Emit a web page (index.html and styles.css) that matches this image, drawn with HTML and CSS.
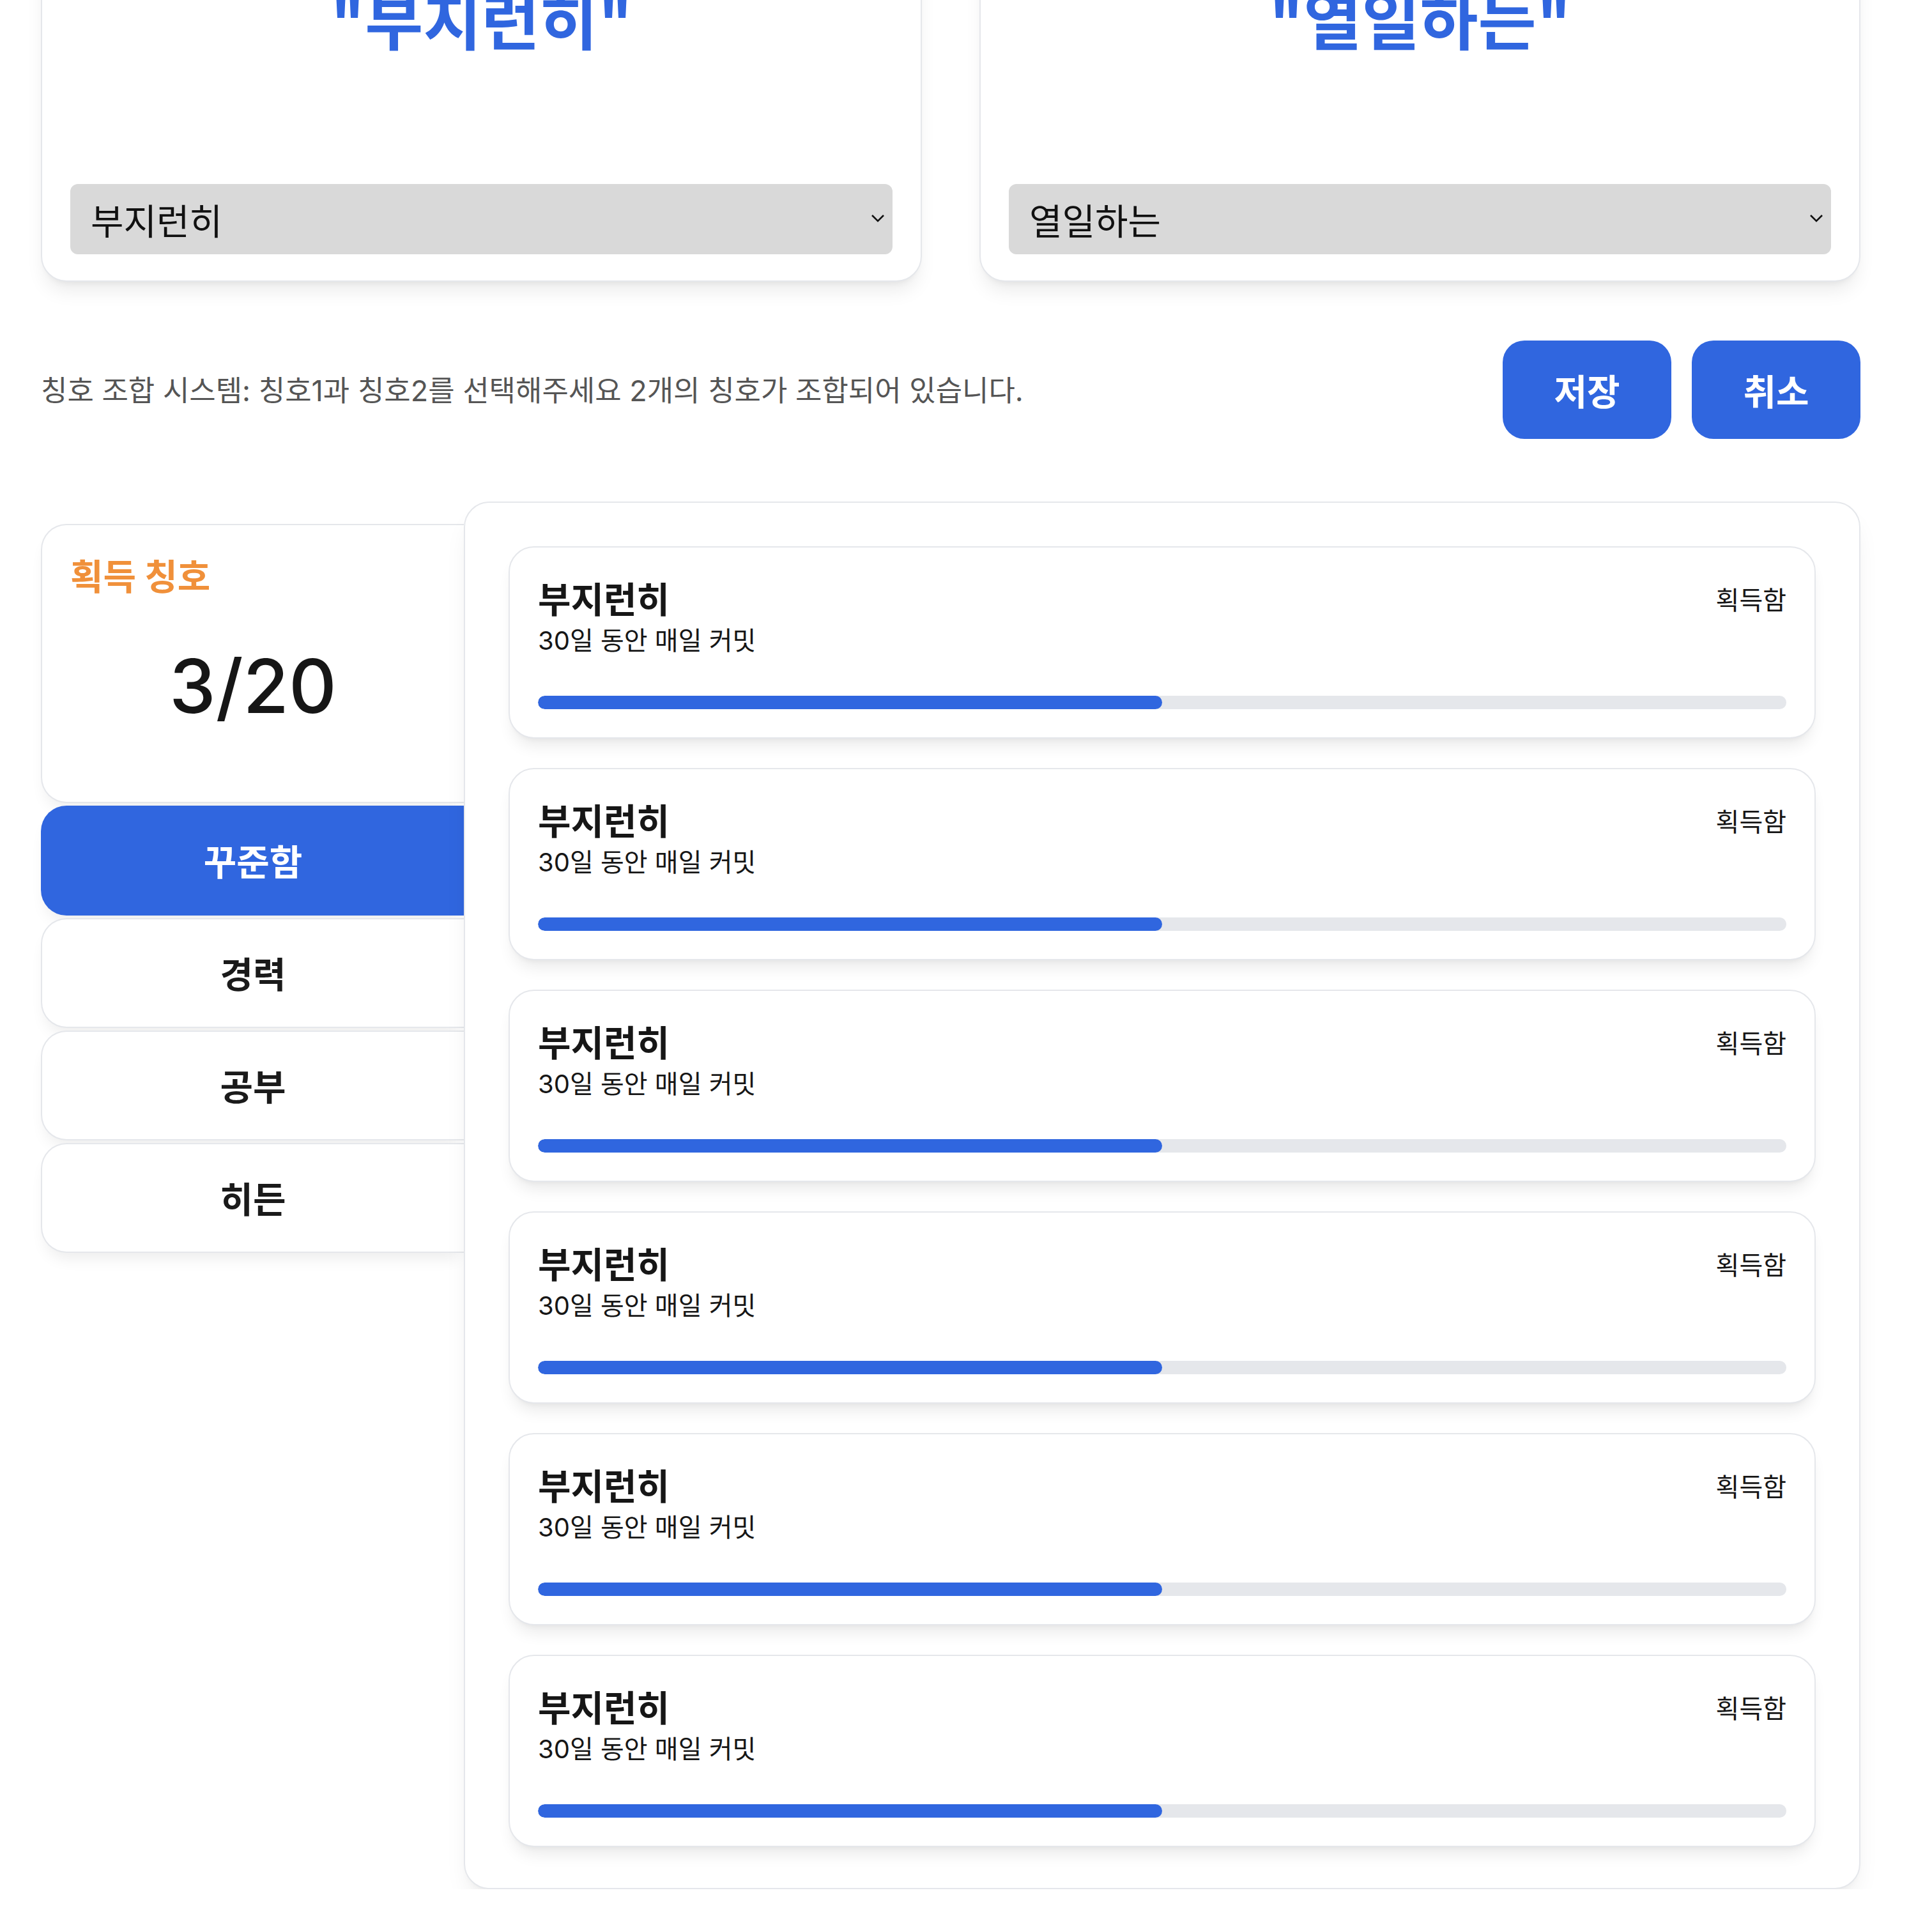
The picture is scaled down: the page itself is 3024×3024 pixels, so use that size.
FILE: index.html
```html
<!DOCTYPE html>
<html lang="ko">
<head>
<meta charset="utf-8">
<title>칭호</title>
<link rel="stylesheet" href="styles.css">
</head>
<body>
<div class="page">
  <div class="top-grid">
    <div class="pick-card">
      <div class="pick-title">"부지런히"</div>
      <div class="select">
        <span>부지런히</span>
        <svg class="chev" width="22" height="14" viewBox="0 0 22 14"><path d="M2 2 L11 11 L20 2" fill="none" stroke="#111" stroke-width="2.6"/></svg>
      </div>
    </div>
    <div class="pick-card">
      <div class="pick-title">"열일하는"</div>
      <div class="select">
        <span>열일하는</span>
        <svg class="chev" width="22" height="14" viewBox="0 0 22 14"><path d="M2 2 L11 11 L20 2" fill="none" stroke="#111" stroke-width="2.6"/></svg>
      </div>
    </div>
  </div>

  <div class="info-row">
    <p class="info">칭호 조합 시스템: 칭호1과 칭호2를 선택해주세요 2개의 칭호가 조합되어 있습니다.</p>
    <div class="actions">
      <button class="btn">저장</button>
      <button class="btn">취소</button>
    </div>
  </div>

  <div class="main">
    <aside class="side">
      <div class="stats">
        <div class="stats-label">획득 칭호</div>
        <div class="stats-count">3/20</div>
      </div>
      <div class="tab active">꾸준함</div>
      <div class="tab">경력</div>
      <div class="tab">공부</div>
      <div class="tab">히든</div>
    </aside>
    <section class="panel">
      <div class="item">
        <div class="item-head"><div class="item-title">부지런히</div><div class="item-badge">획득함</div></div>
        <div class="item-desc">30일 동안 매일 커밋</div>
        <div class="bar"><div class="bar-fill" style="width:50%"></div></div>
      </div>
      <div class="item">
        <div class="item-head"><div class="item-title">부지런히</div><div class="item-badge">획득함</div></div>
        <div class="item-desc">30일 동안 매일 커밋</div>
        <div class="bar"><div class="bar-fill" style="width:50%"></div></div>
      </div>
      <div class="item">
        <div class="item-head"><div class="item-title">부지런히</div><div class="item-badge">획득함</div></div>
        <div class="item-desc">30일 동안 매일 커밋</div>
        <div class="bar"><div class="bar-fill" style="width:50%"></div></div>
      </div>
      <div class="item">
        <div class="item-head"><div class="item-title">부지런히</div><div class="item-badge">획득함</div></div>
        <div class="item-desc">30일 동안 매일 커밋</div>
        <div class="bar"><div class="bar-fill" style="width:50%"></div></div>
      </div>
      <div class="item">
        <div class="item-head"><div class="item-title">부지런히</div><div class="item-badge">획득함</div></div>
        <div class="item-desc">30일 동안 매일 커밋</div>
        <div class="bar"><div class="bar-fill" style="width:50%"></div></div>
      </div>
      <div class="item">
        <div class="item-head"><div class="item-title">부지런히</div><div class="item-badge">획득함</div></div>
        <div class="item-desc">30일 동안 매일 커밋</div>
        <div class="bar"><div class="bar-fill" style="width:50%"></div></div>
      </div>
    </section>
  </div>
</div>
</body>
</html>
```
FILE: styles.css
```css
* { box-sizing: border-box; }
html, body { margin: 0; padding: 0; background: #fff; }
body {
  font-family: Inter, "Noto Sans CJK KR", sans-serif;
  color: #1a1a1a;
  overflow: hidden;
}
.page {
  width: 2848px;
  margin-left: 64px;
}

/* top picker cards */
.top-grid {
  display: grid;
  grid-template-columns: 1379px 1379px;
  column-gap: 90px;
  margin-top: -77px;
}
.pick-card {
  background: #fff;
  border: 2px solid #e5e7eb;
  border-radius: 40px;
  padding: 44px 44px 41px;
  box-shadow: 0 20px 30px -6px rgba(0,0,0,0.08), 0 8px 12px -8px rgba(0,0,0,0.08);
}
.pick-title {
  font-size: 99px;
  font-weight: 700;
  line-height: 115px;
  height: 115px;
  color: #3066df;
  text-align: center;
  margin-top: 8px;
  margin-bottom: 196px;
  white-space: nowrap;
}
.select {
  height: 110px;
  background: #d9d9d9;
  border-radius: 12px;
  display: flex;
  align-items: center;
  justify-content: space-between;
  padding: 0 12px 2px 32px;
  font-size: 56px;
  color: #111;
}
.chev { display: block; }

/* info row */
.info-row {
  display: flex;
  justify-content: space-between;
  align-items: center;
  margin-top: 92px;
}
.info {
  margin: 0 0 4px;
  font-size: 45px;
  color: #555;
}
.actions {
  display: flex;
  gap: 32px;
}
.btn {
  width: 264px;
  height: 154px;
  border: none;
  border-radius: 34px;
  background: #3066df;
  color: #fff;
  font-family: Inter, "Noto Sans CJK KR", sans-serif;
  font-size: 56px;
  font-weight: 700;
  padding: 0 0 2px;
}

/* main area */
.main {
  display: flex;
  margin-top: 98px;
  align-items: flex-start;
}
.side {
  width: 662px;
  flex-shrink: 0;
  padding-top: 35px;
  display: flex;
  flex-direction: column;
  gap: 4px;
}
.stats {
  height: 437px;
  background: #fff;
  border: 2px solid #e5e7eb;
  border-right: none;
  border-radius: 40px 0 0 40px;
  padding: 48px 44px 44px;
  box-shadow: 0 16px 24px -8px rgba(0,0,0,0.08);
}
.stats-label {
  font-size: 56px;
  font-weight: 700;
  line-height: 1.2;
  color: #f0903a;
}
.stats-count {
  margin-top: 68px;
  font-size: 116px;
  font-weight: 500;
  line-height: 1.2;
  text-align: center;
  color: #161616;
}
.tab {
  height: 172px;
  display: flex;
  align-items: center;
  justify-content: center;
  background: #fff;
  border: 2px solid #e5e7eb;
  border-right: none;
  border-radius: 40px 0 0 40px;
  font-size: 56px;
  font-weight: 700;
  color: #1a1a1a;
  padding-bottom: 4px;
  box-shadow: 0 16px 24px -8px rgba(0,0,0,0.08);
}
.tab.active {
  background: #3066df;
  border-color: #3066df;
  color: #fff;
}

.panel {
  flex: 1;
  position: relative;
  background: #fff;
  border: 2px solid #e5e7eb;
  border-radius: 40px;
  padding: 68px 68px 64px;
  display: flex;
  flex-direction: column;
  gap: 46px;
  box-shadow: 0 24px 40px -10px rgba(0,0,0,0.08), 0 8px 14px -8px rgba(0,0,0,0.06);
}
.item {
  height: 301px;
  background: #fff;
  border: 2px solid #e5e7eb;
  border-radius: 40px;
  padding: 44px;
  display: flex;
  flex-direction: column;
  box-shadow: 0 18px 26px -8px rgba(0,0,0,0.09), 0 6px 10px -6px rgba(0,0,0,0.06);
}
.item-head {
  display: flex;
  justify-content: space-between;
  align-items: flex-start;
  padding-top: 5px;
}
.item-title {
  font-size: 56px;
  font-weight: 700;
  line-height: 1.2;
  color: #161616;
}
.item-badge {
  font-size: 40px;
  line-height: 1.3;
  padding-top: 8px;
  color: #161616;
}
.item-desc {
  margin-top: 4px;
  font-size: 40px;
  line-height: 1.3;
  color: #161616;
}
.bar {
  margin-top: auto;
  height: 21px;
  border-radius: 11px;
  background: #e5e7eb;
  overflow: hidden;
}
.bar-fill {
  height: 100%;
  border-radius: 11px;
  background: #3066df;
}
```
